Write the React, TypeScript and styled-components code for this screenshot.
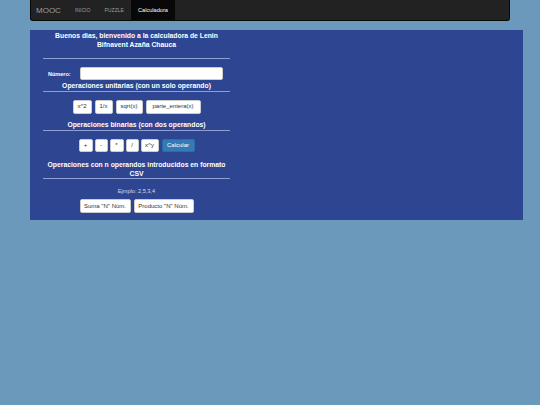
import React from "react";
import styled, { createGlobalStyle } from "styled-components";

const Global = createGlobalStyle`
  html, body { margin: 0; padding: 0; }
  body {
    background: #6a99bc;
    font-family: "Liberation Sans", Arial, sans-serif;
    width: 540px;
    height: 405px;
    overflow: hidden;
  }
`;

const Navbar = styled.nav`
  margin: 0 0 0 30px;
  width: 480px;
  height: 21px;
  box-sizing: border-box;
  background: #222;
  border: 1px solid #080808;
  border-top: none;
  border-radius: 0 0 3px 3px;
  display: flex;
  align-items: stretch;
`;

const Brand = styled.div`
  color: #9d9d9d;
  font-size: 8px;
  padding: 0 7px 0 5px;
  display: flex;
  align-items: center;
`;

const NavItem = styled.div<{ $active?: boolean }>`
  color: ${(p) => (p.$active ? "#fff" : "#9d9d9d")};
  background: ${(p) => (p.$active ? "#080808" : "transparent")};
  font-size: ${(p) => (p.$active ? 5.6 : 5.1)}px;
  padding: 0 7px;
  display: flex;
  align-items: center;
`;

const Panel = styled.main`
  margin: 9px 0 0 30px;
  width: 493px;
  height: 190px;
  box-sizing: border-box;
  background: #2e4592;
  padding: 1px 13px 0;
`;

const Column = styled.div`
  width: 187px;
  text-align: center;
  color: #fff;
`;

const Heading = styled.div<{ $mt?: number }>`
  font-weight: bold;
  font-size: 6.8px;
  line-height: 9px;
  margin-top: ${(p) => p.$mt ?? 0}px;
`;

const Rule = styled.hr<{ $mt?: number }>`
  border: none;
  border-top: 1px solid #8e9fd2;
  margin: ${(p) => p.$mt ?? 0}px 0 0;
  height: 0;
`;

const NumberRow = styled.div`
  display: flex;
  align-items: center;
  margin-top: 8px;
  height: 13px;
`;

const Label = styled.label`
  font-weight: bold;
  font-size: 5.5px;
  width: 37px;
  padding-left: 5px;
  text-align: left;
  box-sizing: border-box;
`;

const Input = styled.input`
  width: 143px;
  height: 13px;
  box-sizing: border-box;
  border: 1px solid #ccc;
  border-radius: 2px;
  background: #fff;
  padding: 0 3px;
  font-size: 6px;
  outline: none;
`;

const ButtonRow = styled.div<{ $mt?: number; $gap?: number }>`
  display: flex;
  justify-content: center;
  gap: ${(p) => p.$gap ?? 3}px;
  margin-top: ${(p) => p.$mt ?? 0}px;
`;

const Btn = styled.button<{ $primary?: boolean; $w?: number }>`
  height: 13.5px;
  ${(p) => (p.$w ? `width: ${p.$w}px;` : "")}
  box-sizing: border-box;
  padding: 0;
  border-radius: 2px;
  font-family: "Liberation Sans", Arial, sans-serif;
  font-size: 6px;
  line-height: 11px;
  white-space: nowrap;
  border: 1px solid ${(p) => (p.$primary ? "#2e6da4" : "#ccc")};
  background: ${(p) => (p.$primary ? "#337ab7" : "#fff")};
  color: ${(p) => (p.$primary ? "#fff" : "#333")};
  margin-left: ${(p) => (p.$primary ? 1 : 0)}px;
`;

const CsvBtn = styled(Btn)`
  height: 14px;
  line-height: 12px;
`;

const Example = styled.div`
  font-size: 5.6px;
  color: #d6dcf0;
  margin-top: 8px;
  line-height: 8px;
`;

export default function App() {
  return (
    <>
      <Global />
      <Navbar>
        <Brand>MOOC</Brand>
        <NavItem>INICIO</NavItem>
        <NavItem>PUZZLE</NavItem>
        <NavItem $active>Calculadora</NavItem>
      </Navbar>
      <Panel>
        <Column>
          <Heading>
            Buenos dias, bienvenido a la calculadora de Lenin
            <br />
            Bifnavent Azaña Chauca
          </Heading>
          <Rule $mt={9} />
          <NumberRow>
            <Label>Número:</Label>
            <Input type="text" />
          </NumberRow>
          <Heading $mt={1}>Operaciones unitarias (con un solo operando)</Heading>
          <Rule $mt={1} />
          <ButtonRow $mt={8}>
            <Btn $w={19}>x^2</Btn>
            <Btn $w={18}>1/x</Btn>
            <Btn $w={27}>sqrt(x)</Btn>
            <Btn $w={55}>parte_entera(x)</Btn>
          </ButtonRow>
          <Heading $mt={6}>Operaciones binarias (con dos operandos)</Heading>
          <Rule $mt={1} />
          <ButtonRow $mt={8} $gap={2}>
            <Btn $w={14}>+</Btn>
            <Btn $w={13}>-</Btn>
            <Btn $w={14}>*</Btn>
            <Btn $w={13}>/</Btn>
            <Btn $w={18}>x^y</Btn>
            <Btn $primary $w={33}>Calcular</Btn>
          </ButtonRow>
          <Heading $mt={8}>
            Operaciones con n operandos introducidos en formato
            <br />
            CSV
          </Heading>
          <Rule $mt={0} />
          <Example>Ejmplo: 2,5,3,4</Example>
          <ButtonRow $mt={4}>
            <CsvBtn $w={51}>Suma "N" Núm.</CsvBtn>
            <CsvBtn $w={60}>Producto "N" Núm.</CsvBtn>
          </ButtonRow>
        </Column>
      </Panel>
    </>
  );
}
